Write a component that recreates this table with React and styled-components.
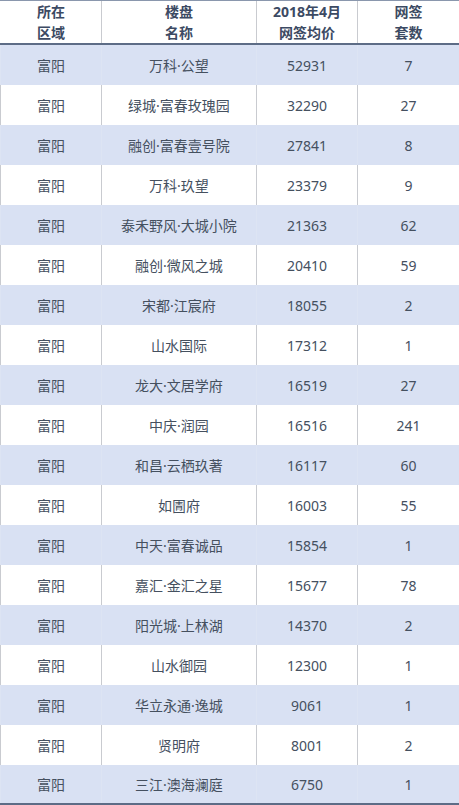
import React from "react";
import styled, { createGlobalStyle } from "styled-components";

const GlobalStyle = createGlobalStyle`
  html, body {
    margin: 0;
    padding: 0;
    background: #ffffff;
  }
  body {
    font-family: "Noto Sans", "Noto Sans CJK SC", sans-serif;
  }
`;

const rows = [
  ["富阳", "万科·公望", "52931", "7"],
  ["富阳", "绿城·富春玫瑰园", "32290", "27"],
  ["富阳", "融创·富春壹号院", "27841", "8"],
  ["富阳", "万科·玖望", "23379", "9"],
  ["富阳", "泰禾野风·大城小院", "21363", "62"],
  ["富阳", "融创·微风之城", "20410", "59"],
  ["富阳", "宋都·江宸府", "18055", "2"],
  ["富阳", "山水国际", "17312", "1"],
  ["富阳", "龙大·文居学府", "16519", "27"],
  ["富阳", "中庆·润园", "16516", "241"],
  ["富阳", "和昌·云栖玖著", "16117", "60"],
  ["富阳", "如圊府", "16003", "55"],
  ["富阳", "中天·富春诚品", "15854", "1"],
  ["富阳", "嘉汇·金汇之星", "15677", "78"],
  ["富阳", "阳光城·上林湖", "14370", "2"],
  ["富阳", "山水御园", "12300", "1"],
  ["富阳", "华立永通·逸城", "9061", "1"],
  ["富阳", "贤明府", "8001", "2"],
  ["富阳", "三江·澳海澜庭", "6750", "1"],
];

const COLS = "101px 155px 101px 1fr";

const Table = styled.div`
  width: 459px;
  height: 805px;
  overflow: hidden;
  border-top: 1px solid #8a97ad;
  box-sizing: border-box;
`;

const Header = styled.div`
  display: grid;
  grid-template-columns: ${COLS};
  height: 42px;
  background: #ffffff;
  border-bottom: 2px solid #5d6c86;
`;

const HeadCell = styled.div`
  display: flex;
  align-items: center;
  justify-content: center;
  text-align: center;
  font-size: 14px;
  font-weight: 700;
  line-height: 21px;
  color: #3c4a63;
  border-left: 1px solid ${(p) => (p.$first ? "transparent" : "#c9cbd0")};
`;

const Row = styled.div`
  display: grid;
  grid-template-columns: ${COLS};
  height: 40px;
  background: ${(p) => (p.$alt ? "#d9e1f3" : "#ffffff")};
  &:last-child {
    height: 38px;
    border-bottom: 2px solid #5d6c86;
  }
`;

const Cell = styled.div`
  display: flex;
  align-items: center;
  justify-content: center;
  font-size: 14px;
  color: #45505f;
  border-left: 1px solid ${(p) => (p.$alt ? "#dde4f3" : "#c9cbd0")};
`;

export default function App() {
  return (
    <>
      <GlobalStyle />
      <Table>
        <Header>
          <HeadCell $first>所在<br />区域</HeadCell>
          <HeadCell>楼盘<br />名称</HeadCell>
          <HeadCell>2018年4月<br />网签均价</HeadCell>
          <HeadCell>网签<br />套数</HeadCell>
        </Header>
        {rows.map((r, i) => {
          const alt = i % 2 === 0;
          return (
            <Row key={i} $alt={alt}>
              {r.map((c, j) => (
                <Cell key={j} $alt={alt}>{c}</Cell>
              ))}
            </Row>
          );
        })}
      </Table>
    </>
  );
}
